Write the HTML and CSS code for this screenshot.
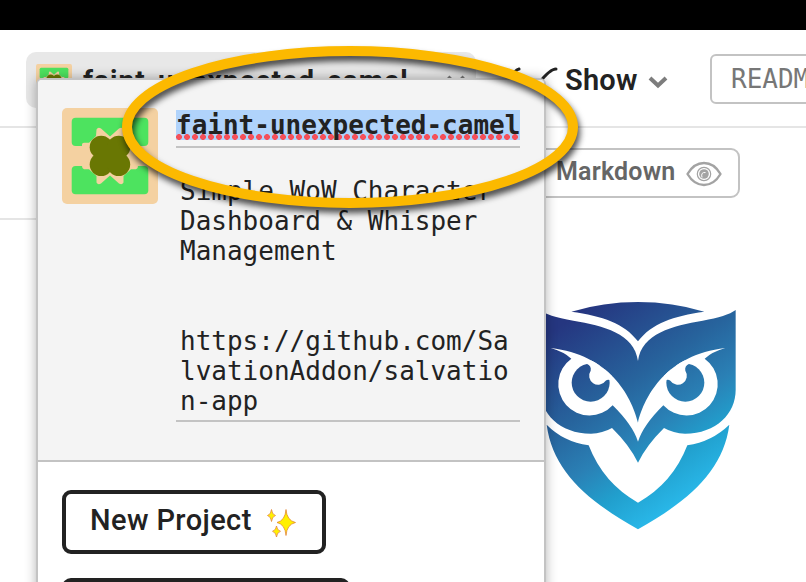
FILE: index.html
```html
<!DOCTYPE html>
<html lang="en">
<head>
<meta charset="utf-8">
<title>faint-unexpected-camel</title>
<link rel="stylesheet" href="styles.css">
</head>
<body>
<svg class="defs" width="0" height="0">
  <symbol id="avatar" viewBox="0 0 96 96">
    <rect width="96" height="96" rx="5" fill="#f4d1a1"/>
    <rect x="9.700" y="9.700" width="76.600" height="28.300" rx="4" fill="#4de35f"/>
    <rect x="9.700" y="58" width="76.600" height="28.300" rx="4" fill="#4de35f"/>
    <path d="M20 38V36.500Q20 34.700 22 34.700L27 34.700 34 28 34.500 21.500Q36 18.500 39 20.500L48 28.500 57 20.500Q60 18.500 61.500 21.500L61.500 28 69 34.700 74 34.700Q76 35 76 38V58Q76 61 74 61.300L69 61.300 61.500 68 61.500 74.500Q60 77.500 57 75.500L48 67.500 39 75.500Q36 77.500 34.500 74.500L34.500 68 27 61.300 22 61.300Q20 61 20 58Z" fill="#f4d1a1"/>
    <g fill="#697703"><circle cx="39.200" cy="39.200" r="11.500"/><circle cx="56.700" cy="39.200" r="11.500"/><circle cx="39.200" cy="56.500" r="11.500"/><circle cx="56.700" cy="56.500" r="11.500"/><rect x="37" y="37" width="22" height="22"/></g>
  </symbol>
</svg>
<div class="app">
  <div class="topbar"></div>
  <header class="header">
    <div class="project"><svg class="mini"><use href="#avatar"/></svg><span class="project-name">faint-unexpected-camel</span>
      <svg class="caret" viewBox="0 0 22 14"><path d="M3 2l8 8 8-8" fill="none" stroke="#777" stroke-width="4"/></svg>
    </div>
    <div class="show">
      <svg class="shades" viewBox="0 0 54 34"><path d="M1 23Q7 5 13 4M33 18Q44 4 50 4" fill="none" stroke="#222" stroke-width="3" stroke-linecap="round"/><path d="M2 18h20v10H6zM20 22h18l-5 10H20z" fill="#222"/></svg>
      <span class="show-label">Show</span>
      <svg class="chevron" viewBox="0 0 20 14"><path d="M2 3l8 7.500L18 3" fill="none" stroke="#7d7d7d" stroke-width="4"/></svg>
    </div>
    <div class="file">README.md</div>
  </header>
  <div class="workspace">
    <aside class="side"><div class="side-head"></div></aside>
    <main class="content">
      <div class="markdown"><span class="markdown-label">Markdown</span>
        <svg class="eye" viewBox="0 0 36 26" fill="none" stroke="#a3a3a3"><path d="M1.500 13Q8 2 18 2T34.500 13Q28 24 18 24T1.500 13Z" stroke-width="2.400" stroke-linejoin="round"/><circle cx="18" cy="13" r="6.700" stroke-width="1.200"/><circle cx="18" cy="13" r="4.800" fill="#a3a3a3" stroke="none"/><path d="M16 16.500Q14.500 11 19.500 11.500" stroke="#fff" stroke-width="1"/></svg>
      </div>
      <svg class="owl" viewBox="0 0 690 780">
        <defs>
          <linearGradient id="g" gradientUnits="userSpaceOnUse" x1="110" y1="125" x2="470" y2="660"><stop offset="0" stop-color="#253680"/><stop offset=".4" stop-color="#27649d"/><stop offset=".62" stop-color="#2a80b5"/><stop offset=".8" stop-color="#219fcd"/><stop offset="1" stop-color="#29b8e9"/></linearGradient>
          <path id="eye" d="M586 204Q545 216 524 236A94 94 0 1 1 400 376Q340 435 324 485V428C345 345 410 225 586 204Z"/>
          <clipPath id="brow"><use href="#eye"/></clipPath>
        </defs>
        <g fill="url(#g)">
          <path d="M124 95Q220 66 324 66T523 95C430 108 365 130 324 184 283 130 218 108 124 95Z"/>
          <path d="M617 90V330C617 400 560 461 465 461Q430 460 402 444 350 495 324 548 298 495 246 444 218 460 183 461C88 461 31 400 31 330V90Q50 108 130 122C220 137 313 160 324 243 335 160 428 137 518 122Q590 110 617 90Z"/>
          <path d="M598 434C580 570 480 660 324 748 168 660 68 570 50 434Q100 485 176 496 220 610 324 668 428 610 472 496 545 485 598 434Z"/>
        </g>
        <g fill="#fff"><use href="#eye"/><use href="#eye" transform="matrix(-1 0 0 1 648 0)"/></g>
        <g fill="url(#g)"><circle cx="466" cy="308" r="57"/><circle cx="182" cy="308" r="57"/></g>
        <g clip-path="url(#brow)"><path d="M404 303Q413 296 421 302A27 27 0 0 0 466 272Q463 257 478 251L455 235 400 280Z" fill="#fff"/></g>
        <g transform="matrix(-1 0 0 1 648 0)"><g clip-path="url(#brow)"><path d="M404 303Q413 296 421 302A27 27 0 0 0 466 272Q463 257 478 251L455 235 400 280Z" fill="#fff"/></g></g>
      </svg>
    </main>
  </div>
  <section class="popover">
    <div class="info">
      <svg class="avatar"><use href="#avatar"/></svg>
      <div class="fields">
        <div class="name"><span class="selected">faint-unexpected-camel</span></div>
        <div class="description"><p>Simple WoW Character Dashboard &amp; Whisper Management</p><p class="url">https://github.com/SalvationAddon/salvation-app</p></div>
      </div>
    </div>
    <div class="actions">
      <div class="button"><span class="button-label">New Project</span>
        <svg class="sparkles" viewBox="0 0 30 30" fill="#fff000" stroke="#e07a2a" stroke-width=".7"><path d="M19 1.500Q19.800 12.500 28.500 14.500 19.800 16.500 19 27.500 18.200 16.500 10 14.500 18.200 12.500 19 1.500ZM4.500 1.500Q5 6.500 8.500 7.500 5 8.500 4.500 13.500 4 8.500 .5 7.500 4 6.500 4.500 1.500ZM9.500 18Q10 22.200 13.500 23.300 10 24.400 9.500 29 9 24.400 5.500 23.300 9 22.200 9.500 18Z"/><path d="M19 10L20.700 13 23.500 14.500 20.700 16 19 19 17.300 16 14.500 14.500 17.300 13Z" fill="#fff000" stroke="none"/></svg>
      </div>
      <div class="button next"></div>
    </div>
  </section>
  <svg class="highlight" viewBox="0 0 806 582"><ellipse cx="350" cy="127" rx="223" ry="76" fill="none" stroke="#fcb900" stroke-width="10"/></svg>
</div>
</body>
</html>
```
FILE: styles.css
```css
* { box-sizing: border-box; }
body { margin: 0; background: #fff; color: #222; font-family: Roboto, "Liberation Sans", sans-serif; overflow: hidden; }
.defs { position: absolute; }
.app { position: relative; width: 806px; height: 582px; overflow: hidden; }
.topbar { height: 30px; background: #000; }
.header { display: flex; height: 98px; padding: 22px 0 0 26px; border-bottom: 2px solid #e5e5e5; overflow: hidden; }
.project { display: flex; flex: none; align-items: center; width: 450px; height: 56px; padding-left: 10px; border-radius: 10px; background: #e8e8e8; }
.mini { width: 36px; height: 36px; margin: 4px 11px 0 0; }
.project-name { width: 328px; margin-top: 2px; font-size: 28px; line-height: 36px; font-weight: 700; letter-spacing: 1.05px; white-space: nowrap; }
.caret { width: 22px; height: 14px; margin: 4px 0 0 34px; }
.show { display: flex; flex: none; width: 234px; height: 56px; align-items: center; padding-left: 30px; }
.shades { flex: none; width: 54px; height: 34px; margin: 4px 5px 0 0; }
.show-label { width: 72px; font-size: 29px; font-weight: 600; letter-spacing: .2px; }
.chevron { width: 20px; height: 14px; margin: 4px 0 0 11px; }
.file { flex: none; width: 220px; height: 50px; margin-top: 2px; padding-left: 19px; border: 2px solid #c3c3c3; border-radius: 6px; color: #777; font: 26px/47px "DejaVu Sans Mono", monospace; }
.workspace { display: flex; height: 454px; }
.side { width: 300px; }
.side-head { height: 92px; border-bottom: 2px solid #e5e5e5; }
.content { width: 506px; padding: 20px 0 0 230px; }
.markdown { display: flex; align-items: center; width: 210px; height: 50px; padding-left: 24px; border: 2px solid #c3c3c3; border-radius: 9px; color: #666; }
.markdown-label { width: 120px; margin-top: -3px; font-size: 25px; font-weight: 600; letter-spacing: .2px; }
.eye { width: 36px; height: 26px; margin: 2px 0 0 10px; }
.owl { display: block; width: 230px; height: 260px; margin-top: 82px; }
.popover { position: absolute; top: 78px; left: 36px; width: 510px; height: 530px; border: 2px solid #c3c3c3; border-radius: 6px; overflow: hidden; background: #fff; box-shadow: 0 0 12px rgba(0,0,0,.3); }
.info { display: flex; gap: 18px; height: 382px; padding: 28px 24px 0; border-bottom: 2px solid #c3c3c3; background: #f4f4f4; }
.avatar { flex: none; width: 96px; height: 96px; }
.fields { width: 344px; font: 26px/30px "DejaVu Sans Mono", monospace; }
.name { height: 38px; margin-top: 2px; border-bottom: 2px solid #c3c3c3; font-weight: 700; white-space: nowrap; }
.selected { display: block; width: 344px; height: 30px; background: radial-gradient(circle at 3px 3px, #f4505a 2.6px, transparent 3.2px) 0 24px / 8px 6px repeat-x #b0d3fb; }
.description { height: 274px; padding: 28px 0 0 4px; border-bottom: 2px solid #c3c3c3; }
.description p { margin: 0; }
.description .url { width: 330px; margin-top: 60px; word-break: break-all; }
.actions { display: flex; flex-direction: column; gap: 24px; padding: 28px 24px; }
.button { display: flex; flex: none; align-items: center; width: 264px; height: 64px; padding-left: 24px; border: 4px solid #222; border-radius: 9px; font-size: 29px; font-weight: 500; }
.button-label { width: 160px; margin-top: -4px; white-space: nowrap; letter-spacing: .4px; }
.sparkles { width: 30px; height: 30px; margin: 2px 0 0 17px; }
.next { width: 288px; }
.highlight { position: absolute; top: 0; left: 0; width: 806px; height: 582px; pointer-events: none; filter: drop-shadow(2px 5px 3px rgba(0,0,0,.7)); }
```
